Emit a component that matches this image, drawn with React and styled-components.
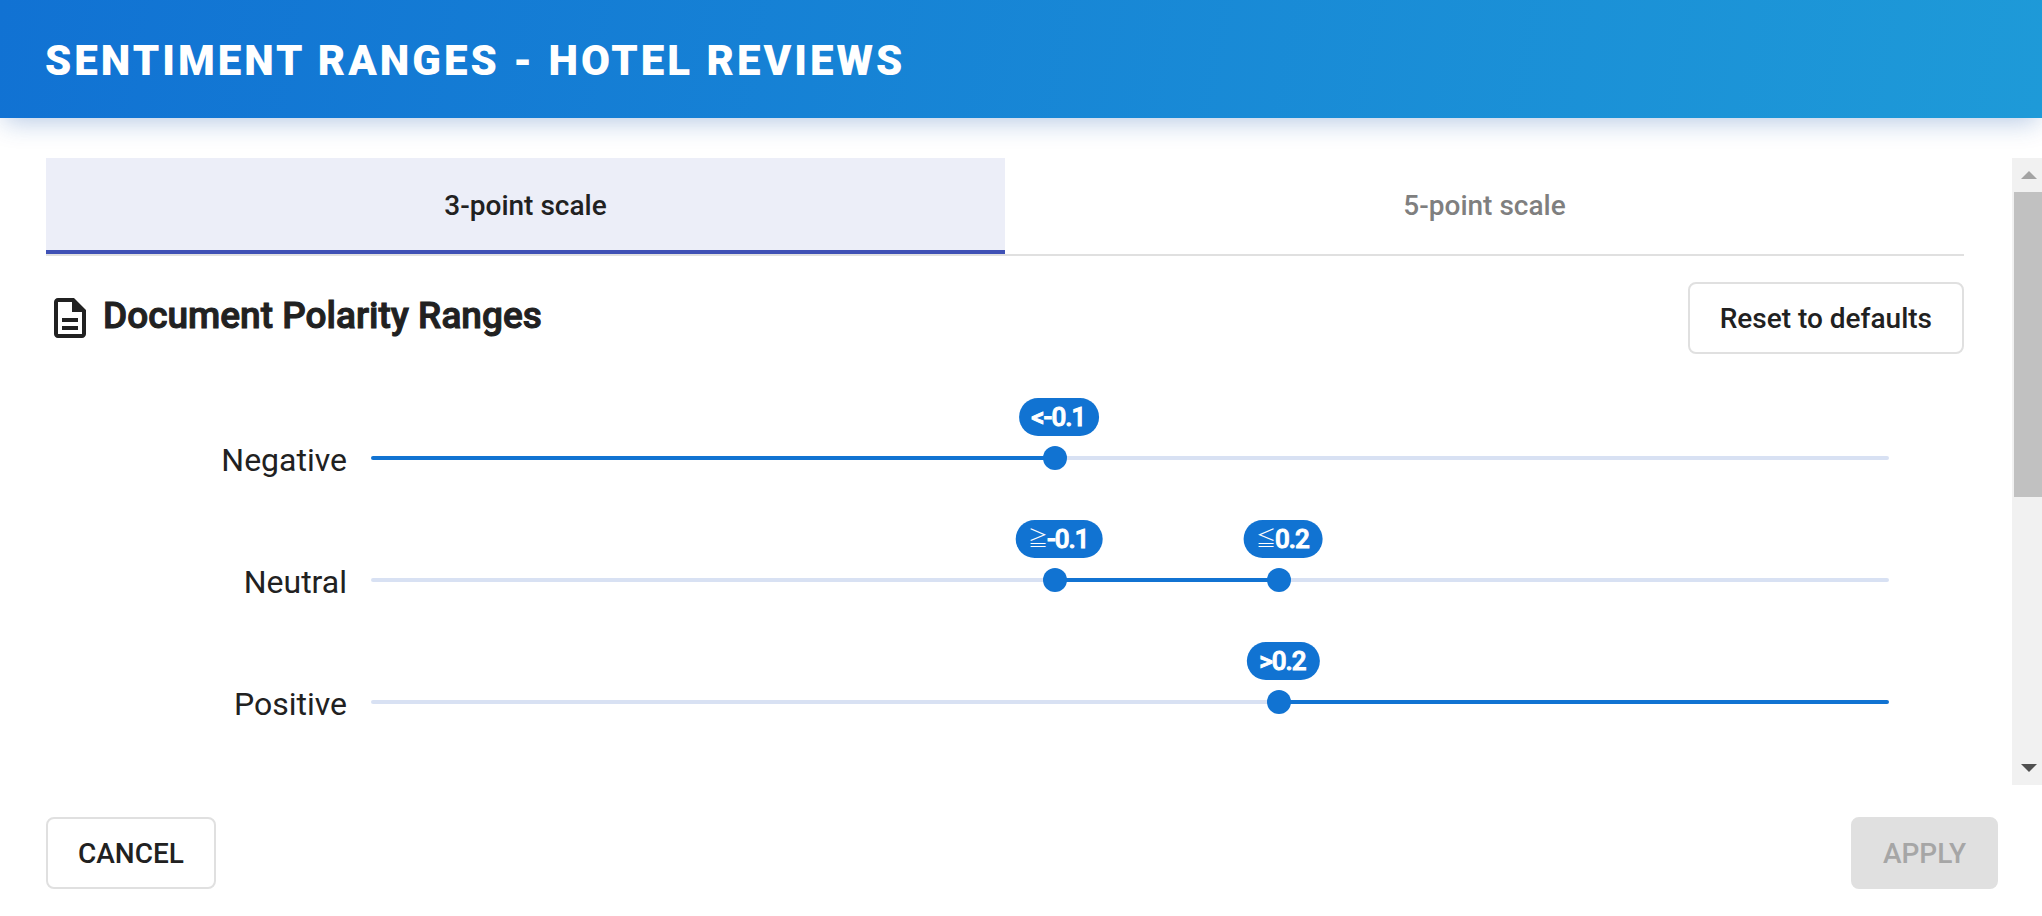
import { useState } from 'react'
import styled, { createGlobalStyle } from 'styled-components';
import { MdOutlineDescription } from 'react-icons/md';

const DEFAULTS = { low: -0.1, high: 0.2 };

const toFraction = value => (Number(value) + 1) / 2;

// centre of the thumb, which travels 12px short of either end of the track
const thumbAt = value => `calc(12px + (100% - 24px) * ${toFraction(value)})`;

function RangeRow({ label, from, to, handles }) {
    const start = from === undefined ? '0%' : thumbAt(from);
    const end = to === undefined ? '100%' : thumbAt(to);

    return (
        <Row>
            <RowLabel htmlFor={handles[0].id}>{label}</RowLabel>
            <Slider>
                <Track style={{ '--start': start, '--end': end }} />
                {handles.map(handle => (
                    <Handle
                        key={handle.id}
                        id={handle.id}
                        aria-label={`${label} ${handle.sign} ${handle.value}`}
                        type="range"
                        min="-1"
                        max="1"
                        step="0.1"
                        value={handle.value}
                        onChange={event => handle.onChange(Number(event.target.value))} />
                ))}
                {handles.map(handle => (
                    <Badge key={handle.id} htmlFor={handle.id} style={{ left: thumbAt(handle.value) }}>
                        <Sign $thin={handle.sign === '≧' || handle.sign === '≦'}>{handle.sign}</Sign>
                        {handle.value}
                    </Badge>
                ))}
            </Slider>
        </Row>
    );
}

export default function App() {

    const [tab, setTab] = useState(3);
    const [low, setLow] = useState(DEFAULTS.low);
    const [high, setHigh] = useState(DEFAULTS.high);

    const changed = low !== DEFAULTS.low || high !== DEFAULTS.high;

    const changeLow = value => setLow(Math.min(value, high));
    const changeHigh = value => setHigh(Math.max(value, low));

    function reset() {
        setLow(DEFAULTS.low);
        setHigh(DEFAULTS.high);
    }

    return (
        <Page>
            <GlobalStyle />
            <Header>
                <Title>SENTIMENT RANGES - HOTEL REVIEWS</Title>
            </Header>

            <Body>
                <Content>
                    <Tabs role="tablist">
                        <Tab role="tab" aria-selected={tab === 3} $active={tab === 3} onClick={() => setTab(3)}>3-point scale</Tab>
                        <Tab role="tab" aria-selected={tab === 5} $active={tab === 5} onClick={() => setTab(5)}>5-point scale</Tab>
                    </Tabs>

                    <SectionHead>
                        <MdOutlineDescription size={48} />
                        <SectionTitle>Document Polarity Ranges</SectionTitle>
                        <Button onClick={reset}>Reset to defaults</Button>
                    </SectionHead>

                    <RangeRow
                        label="Negative"
                        to={low}
                        handles={[{ id: 'negative', sign: '<', value: low, onChange: changeLow }]} />
                    <RangeRow
                        label="Neutral"
                        from={low}
                        to={high}
                        handles={[
                            { id: 'neutral-from', sign: '≧', value: low, onChange: changeLow },
                            { id: 'neutral-to', sign: '≦', value: high, onChange: changeHigh }
                        ]} />
                    <RangeRow
                        label="Positive"
                        from={high}
                        handles={[{ id: 'positive', sign: '>', value: high, onChange: changeHigh }]} />
                </Content>

                <Scrollbar>
                    <ScrollButton aria-label="Scroll up" $color="#a3a3a3">
                        <svg width="16" height="8" viewBox="0 0 16 8"><path d="M0 8L8 0l8 8z" /></svg>
                    </ScrollButton>
                    <ScrollThumb />
                    <ScrollSpace />
                    <ScrollButton aria-label="Scroll down" $color="#505050">
                        <svg width="16" height="8" viewBox="0 0 16 8"><path d="M0 0h16L8 8z" /></svg>
                    </ScrollButton>
                </Scrollbar>
            </Body>

            <Footer>
                <Button>CANCEL</Button>
                <Button disabled={!changed}>APPLY</Button>
            </Footer>
        </Page>
    );
}

const GlobalStyle = createGlobalStyle`
* {
    box-sizing: border-box;
}
body {
    margin: 0;
    background: #fff;
    color: #212121;
    font-family: Roboto, "Noto Sans CJK JP", sans-serif;
}
button {
    font-family: inherit;
    cursor: pointer;
}
`

const Page = styled.div`
display: flex;
flex-direction: column;
min-height: 100vh;
`

const Header = styled.header`
display: flex;
align-items: center;
height: 118px;
padding: 4px 45px 0;
color: #fff;
background: linear-gradient(100deg, #1172d3 0%, #1e9ad8 100%);
box-shadow: 0 8px 24px -4px rgba(17, 80, 170, 0.3);
`

const Title = styled.h1`
margin: 0;
font-size: 42px;
line-height: 48px;
font-weight: 900;
letter-spacing: 3px;
`

const Body = styled.main`
display: flex;
flex: 1;
gap: 48px;
padding: 40px 0 0 46px;
`

const Content = styled.div`
flex: 1;
`

const Tabs = styled.div`
display: flex;
border-bottom: 2px solid #e0e0e0;
`

const Tab = styled.button`
flex: 1;
height: 96px;
padding: 3px 0 0;
border: none;
border-bottom: 4px solid ${props => (props.$active ? '#3f51b5' : 'transparent')};
background: ${props => (props.$active ? '#eceef8' : 'transparent')};
color: ${props => (props.$active ? '#212121' : '#7f7f7f')};
font-size: 28px;
font-weight: 500;
`

const SectionHead = styled.div`
display: flex;
align-items: center;
gap: 9px;
margin: 26px 0 43px;
`

const SectionTitle = styled.h2`
flex: 1;
margin: 0;
padding-bottom: 4px;
font-size: 37px;
line-height: 44px;
font-weight: 500;
-webkit-text-stroke: 1px currentColor;
`

const Button = styled.button`
height: 72px;
padding: 0 30px;
border: 2px solid #e0e0e0;
border-radius: 8px;
background: #fff;
color: #212121;
font-size: 28px;
font-weight: 500;

&:disabled {
    background: #e0e0e0;
    color: #a6a6a6;
    cursor: default;
}
`

const Row = styled.div`
display: grid;
grid-template-columns: 301px 1fr;
align-items: center;
gap: 24px;
height: 122px;
padding-right: 75px;
`

const RowLabel = styled.label`
padding-top: 4px;
font-size: 32px;
line-height: 40px;
text-align: right;
`

const Slider = styled.div`
position: relative;
display: grid;
align-items: center;
height: 24px;
`

const Track = styled.div`
grid-area: 1 / 1;
height: 4px;
border-radius: 2px;
background: linear-gradient(
    90deg,
    #d8e1f3 var(--start),
    #1173d2 var(--start),
    #1173d2 var(--end),
    #d8e1f3 var(--end)
);
`

const Handle = styled.input`
grid-area: 1 / 1;
width: 100%;
height: 24px;
margin: 0;
background: transparent;
appearance: none;
pointer-events: none;

&::-webkit-slider-thumb {
    appearance: none;
    width: 24px;
    height: 24px;
    border: none;
    border-radius: 50%;
    background: #1173d2;
    cursor: pointer;
    pointer-events: auto;
}
`

const Badge = styled.output`
position: absolute;
bottom: 34px;
display: flex;
height: 38px;
margin-left: 4px;
padding: 0 14px 0 12px;
border-radius: 19px;
transform: translateX(-50%);
background: #1173d2;
color: #fff;
font-size: 26px;
line-height: 38px;
font-weight: 500;
letter-spacing: -1px;
white-space: nowrap;
-webkit-text-stroke: 1px currentColor;
`

const Sign = styled.span`
${props => props.$thin && `
font-size: 20px;
font-weight: 300;
-webkit-text-stroke: 0;
`}
`

const Scrollbar = styled.div`
display: flex;
flex-direction: column;
width: 30px;
background: #f1f1f1;
`

const ScrollButton = styled.button`
display: flex;
align-items: center;
justify-content: center;
height: 34px;
padding: 0 0 0 4px;
border: none;
background: transparent;
fill: ${props => props.$color};
`

const ScrollThumb = styled.div`
flex: 6;
margin-left: 2px;
background: #c1c1c1;
`

const ScrollSpace = styled.div`
flex: 5;
`

const Footer = styled.footer`
display: flex;
justify-content: space-between;
padding: 32px 44px 27px 46px;
`
